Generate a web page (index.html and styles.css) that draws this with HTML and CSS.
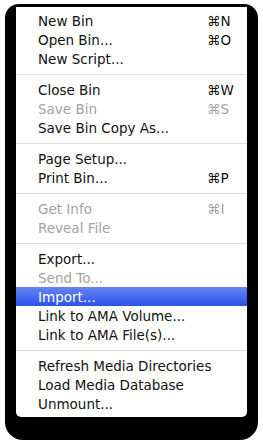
FILE: index.html
```html
<!DOCTYPE html>
<html>
<head>
<meta charset="utf-8">
<link rel="stylesheet" href="styles.css">
</head>
<body>
<div class="frame">
  <div class="menu">
    <div class="item"><span class="label">New Bin</span><span class="key">⌘N</span></div>
    <div class="item"><span class="label">Open Bin...</span><span class="key">⌘O</span></div>
    <div class="item"><span class="label">New Script...</span></div>
    <div class="sep"></div>
    <div class="item"><span class="label">Close Bin</span><span class="key">⌘W</span></div>
    <div class="item disabled"><span class="label">Save Bin</span><span class="key">⌘S</span></div>
    <div class="item"><span class="label">Save Bin Copy As...</span></div>
    <div class="sep"></div>
    <div class="item"><span class="label">Page Setup...</span></div>
    <div class="item"><span class="label">Print Bin...</span><span class="key">⌘P</span></div>
    <div class="sep"></div>
    <div class="item disabled"><span class="label">Get Info</span><span class="key">⌘I</span></div>
    <div class="item disabled"><span class="label">Reveal File</span></div>
    <div class="sep"></div>
    <div class="item"><span class="label">Export...</span></div>
    <div class="item disabled"><span class="label">Send To...</span></div>
    <div class="item active"><span class="label">Import...</span></div>
    <div class="item"><span class="label">Link to AMA Volume...</span></div>
    <div class="item"><span class="label">Link to AMA File(s)...</span></div>
    <div class="sep"></div>
    <div class="item"><span class="label">Refresh Media Directories</span></div>
    <div class="item"><span class="label">Load Media Database</span></div>
    <div class="item"><span class="label">Unmount...</span></div>
  </div>
</div>
</body>
</html>
```
FILE: styles.css
```css
html, body {
  margin: 0;
  padding: 0;
  background: #fff;
}
body {
  width: 263px;
  height: 444px;
  overflow: hidden;
  padding: 4px 0 0 5px;
  box-sizing: border-box;
  font-family: "DejaVu Sans", "Liberation Sans", sans-serif;
}
.frame {
  width: 253px;
  height: 436px;
  box-sizing: border-box;
  background: #000;
  border-radius: 14px 14px 18px 18px;
  padding: 3px 11px 23px 11px;
}
.menu {
  background: #fff;
  height: 410px;
  box-sizing: border-box;
  padding: 4px 0;
  border-radius: 0 0 5px 5px;
  display: flex;
  flex-direction: column;
}
.item {
  height: 19px;
  display: flex;
  align-items: center;
  justify-content: space-between;
  padding: 0 14px 0 22px;
  font-size: 13.5px;
  color: #111;
  white-space: nowrap;
}
.item.disabled {
  color: #a3a3a3;
}
.item.active {
  background: linear-gradient(#6584f2, #2c52ea);
  color: #fff;
}
.key {
  width: 26px;
  text-align: left;
}
.sep {
  height: 12px;
  display: flex;
  align-items: center;
}
.sep::before {
  content: "";
  display: block;
  width: 100%;
  height: 1px;
  background: #dedede;
}
```
